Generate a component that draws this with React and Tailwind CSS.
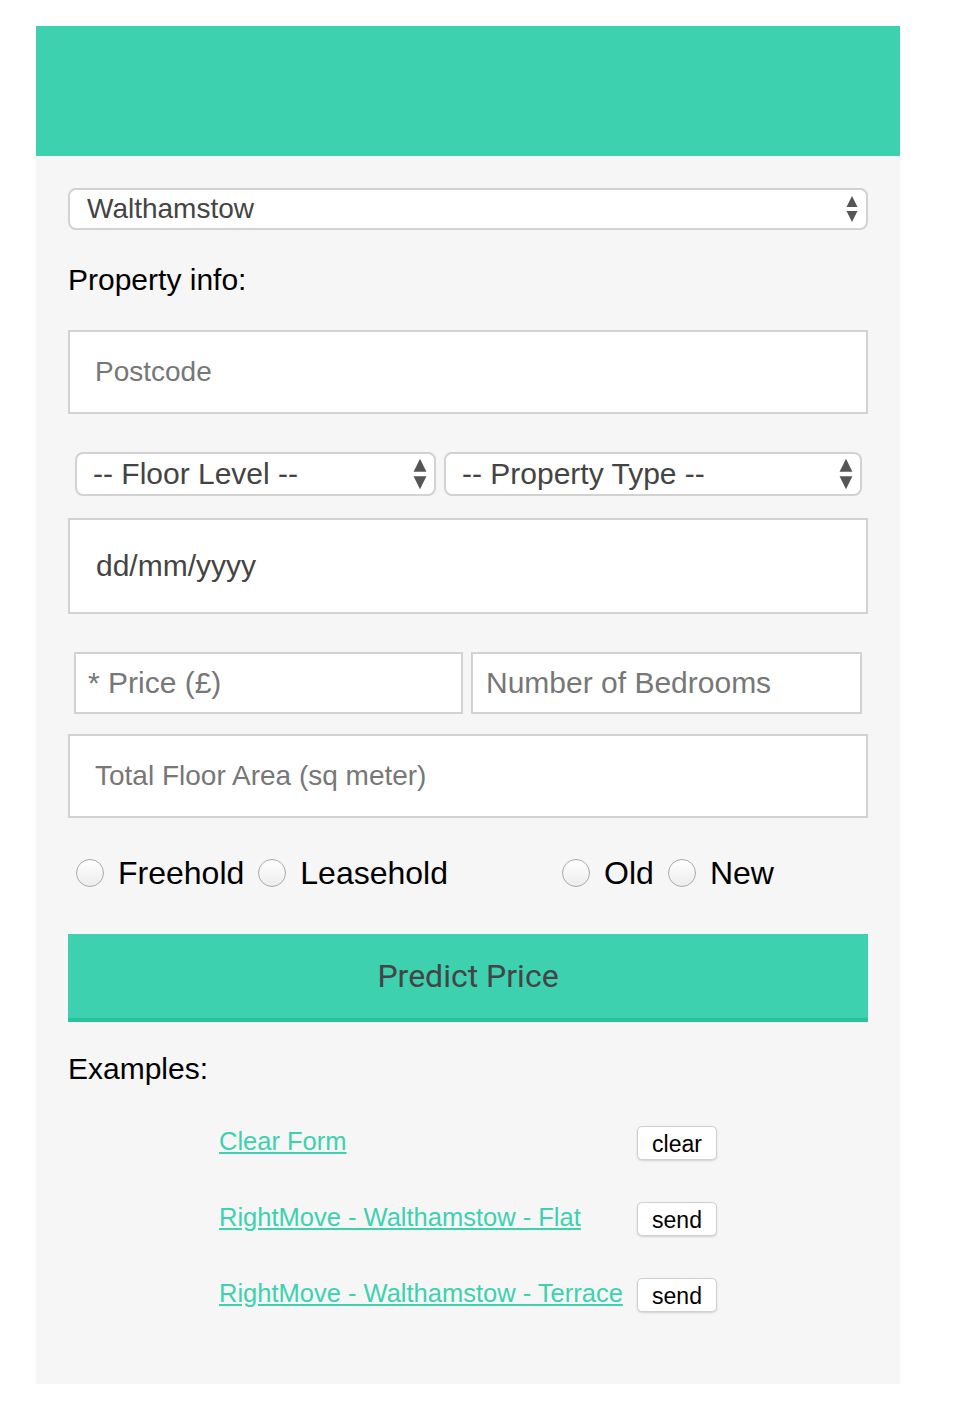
import { useState } from "react"

const Arrows = ({ className }) => (
  <svg viewBox="0 0 12 26" className={className} fill="#555">
    <path d="M6 0 L11.5 11 L0.5 11 Z" />
    <path d="M0.5 15 L11.5 15 L6 26 Z" />
  </svg>
)

const Select = ({ value, options, onChange, className, textClass, arrowClass }) => (
  <div className={`relative ${className}`}>
    <select
      value={value}
      onChange={(e) => onChange(e.target.value)}
      className={`h-full w-full appearance-none rounded-[8px] border-2 border-[#d2d2d2] bg-white text-[#444] outline-none ${textClass}`}
    >
      {options.map((o) => (
        <option key={o} value={o}>
          {o}
        </option>
      ))}
    </select>
    <Arrows className={`pointer-events-none absolute top-1/2 -translate-y-1/2 ${arrowClass}`} />
  </div>
)

const Radio = ({ name, label, checked, onChange }) => (
  <label className="flex items-center">
    <input
      type="radio"
      name={name}
      checked={checked}
      onChange={onChange}
      className="h-[28px] w-[28px] appearance-none rounded-full border border-[#aaa] bg-gradient-to-b from-white to-[#ececec] checked:border-[7px] checked:border-[#3dd1b0]"
    />
    <span className="ml-[14px] mr-[14px] text-[32px] leading-[36px] text-black">{label}</span>
  </label>
)

const examples = [
  { label: "Clear Form", action: "clear" },
  { label: "RightMove - Walthamstow - Flat", action: "send" },
  { label: "RightMove - Walthamstow - Terrace", action: "send" },
]

export default function App() {
  const [area, setArea] = useState("Walthamstow")
  const [floor, setFloor] = useState("-- Floor Level --")
  const [ptype, setPtype] = useState("-- Property Type --")
  const [tenure, setTenure] = useState("")
  const [age, setAge] = useState("")

  const boxCls = "w-full border-2 border-[#d2d2d2] bg-white text-[#444] outline-none"
  const inputCls = `${boxCls} placeholder:text-[#777]`

  return (
    <div className="min-h-[1418px] bg-white pt-[26px] font-['Liberation_Sans',Arial,sans-serif]">
      <div className="ml-[36px] w-[864px]">
        <div className="h-[130px] bg-[#3dd1b0]" />

        <div className="bg-[#f6f6f6] px-[32px] pb-[53px] pt-[32px]">
          <Select
            value={area}
            onChange={setArea}
            options={["Walthamstow", "Hackney", "Islington"]}
            className="h-[42px]"
            textClass="pl-[17px] text-[28px] leading-[32px]"
            arrowClass="right-[10px] h-[26px] w-[12px]"
          />

          <div className="mt-[32px] text-[30px] leading-[36px] text-black">Property info:</div>

          <input placeholder="Postcode" className={`${inputCls} mt-[32px] h-[84px] px-[25px] text-[28px]`} />

          <div className="mt-[38px] flex h-[44px] gap-[8px] px-[7px] pr-[6px]">
            <Select
              value={floor}
              onChange={setFloor}
              options={["-- Floor Level --", "Ground", "1st", "2nd"]}
              className="w-[361px]"
              textClass="pl-[16px] text-[30px] leading-[34px]"
              arrowClass="right-[9px] h-[32px] w-[14px]"
            />
            <Select
              value={ptype}
              onChange={setPtype}
              options={["-- Property Type --", "Flat", "Terrace", "Detached"]}
              className="flex-1"
              textClass="pl-[16px] text-[30px] leading-[34px]"
              arrowClass="right-[9px] h-[32px] w-[14px]"
            />
          </div>

          <input
            placeholder="dd/mm/yyyy"
            className={`${boxCls} mt-[22px] h-[96px] px-[26px] text-[30px] placeholder:text-[#444]`}
          />

          <div className="mt-[38px] flex h-[62px] gap-[8px] px-[6px]">
            <input placeholder="* Price (£)" className={`${inputCls} h-full flex-1 px-[12px] text-[30px]`} />
            <input placeholder="Number of Bedrooms" className={`${inputCls} h-full flex-1 px-[13px] text-[30px]`} />
          </div>

          <input
            placeholder="Total Floor Area (sq meter)"
            className={`${inputCls} mt-[20px] h-[84px] px-[25px] text-[28px]`}
          />

          <div className="mt-[37px] flex h-[36px]">
            <div className="flex flex-1 justify-center pr-[6px] pl-[8px]">
              <Radio name="tenure" label="Freehold" checked={tenure === "f"} onChange={() => setTenure("f")} />
              <Radio name="tenure" label="Leasehold" checked={tenure === "l"} onChange={() => setTenure("l")} />
            </div>
            <div className="flex flex-1 justify-center pl-[14px]">
              <Radio name="age" label="Old" checked={age === "o"} onChange={() => setAge("o")} />
              <Radio name="age" label="New" checked={age === "n"} onChange={() => setAge("n")} />
            </div>
          </div>

          <button className="mt-[43px] h-[88px] w-full border-b-4 border-[#29c39b] bg-[#3dd1b0] font-['Roboto',sans-serif] text-[32px] text-[#444]">
            Predict Price
          </button>

          <div className="mt-[29px] text-[30px] leading-[36px] text-black">Examples:</div>

          <div className="mx-auto mt-[16px] grid w-[498px] grid-cols-[418px_80px]">
            {examples.map((ex) => (
              <div key={ex.label} className="contents">
                <div className="flex h-[76px] items-center">
                  <a href="#" className="text-[25.5px] text-[#3dd1b0] underline">
                    {ex.label}
                  </a>
                </div>
                <div className="flex h-[76px] items-center">
                  <button className="mt-[4px] h-[34px] w-[80px] rounded-[5px] border border-[#d0d0d0] bg-white text-[23px] text-black shadow-[0_1px_2px_rgba(0,0,0,0.15)]">
                    {ex.action}
                  </button>
                </div>
              </div>
            ))}
          </div>
        </div>
      </div>
    </div>
  )
}
